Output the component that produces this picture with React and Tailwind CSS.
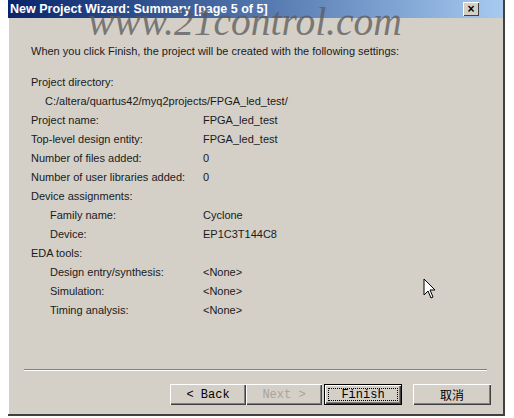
import React from "react";

const rows = [
  { label: "Project name:", value: "FPGA_led_test" },
  { label: "Top-level design entity:", value: "FPGA_led_test" },
  { label: "Number of files added:", value: "0" },
  { label: "Number of user libraries added:", value: "0" },
  { label: "Device assignments:", heading: true },
  { label: "Family name:", value: "Cyclone", indent: true },
  { label: "Device:", value: "EP1C3T144C8", indent: true },
  { label: "EDA tools:", heading: true },
  { label: "Design entry/synthesis:", value: "<None>", indent: true },
  { label: "Simulation:", value: "<None>", indent: true },
  { label: "Timing analysis:", value: "<None>", indent: true },
];

function Row({ label, value, indent }) {
  return (
    <div className="grid h-[19px] grid-cols-[172px_1fr] items-center">
      <span className={indent ? "pl-[19px]" : ""}>{label}</span>
      <span>{value}</span>
    </div>
  );
}

function Button({ children, disabled, primary, cjk }) {
  return (
    <button
      className={
        "flex h-[21px] w-full items-center justify-center bg-[#d4d0c8] text-[12px] " +
        (primary
          ? "border border-black p-[3px] shadow-[inset_1px_1px_0_#fff,inset_-1px_-1px_0_#404040,inset_-2px_-2px_0_#808080]"
          : "shadow-[inset_1px_1px_0_#fff,inset_-1px_-1px_0_#404040,inset_-2px_-2px_0_#808080]") +
        (disabled ? " text-[#a8a49c]" : " text-black")
      }
      style={{
        fontFamily: cjk
          ? '"Noto Sans CJK SC", sans-serif'
          : '"Liberation Mono", "DejaVu Sans Mono", monospace',
      }}
    >
      {primary ? (
        <span className="flex h-full w-full items-center justify-center border border-dotted border-black leading-none">
          {children}
        </span>
      ) : (
        children
      )}
    </button>
  );
}

export default function App() {
  return (
    <div className="h-[418px] w-[514px] bg-white">
      <div
        className="relative ml-[8px] h-[416px] w-[497px] border-r-2 border-b-2 border-[#404040] bg-[#d4d0c8] shadow-[inset_1px_0_0_#fff]"
        style={{ fontFamily: '"Liberation Sans", Arial, sans-serif' }}
      >
        {/* Title bar */}
        <div className="flex h-[18px] items-center justify-between bg-gradient-to-r from-[#0a246a] to-[#a6caf0] pl-[2px] pr-[24px]">
          <span className="text-[12.5px] font-bold text-white">
            New Project Wizard: Summary [page 5 of 5]
          </span>
          <span className="flex h-[14px] w-[16px] items-center justify-center bg-[#d4d0c8] text-[12px] font-bold leading-none shadow-[inset_1px_1px_0_#fff,inset_-1px_-1px_0_#404040]">
            ×
          </span>
        </div>

        {/* Watermark */}
        <div
          className="pointer-events-none absolute left-[80px] top-[-7px] text-[39.5px] italic text-[#5a5a5a] opacity-75"
          style={{ fontFamily: '"Liberation Serif", serif' }}
        >
          www.21control.com
        </div>

        {/* Content */}
        <div className="flex flex-col pl-[23px] text-[11px] text-[#1a1a1a]">
          <div className="mt-[25px] h-[16px]">
            When you click Finish, the project will be created with the following settings:
          </div>
          <div className="mt-[14px] flex flex-col">
            <div className="h-[19px] leading-[19px]">Project directory:</div>
            <div className="h-[19px] pl-[14px] leading-[19px]">
              C:/altera/quartus42/myq2projects/FPGA_led_test/
            </div>
            {rows.map((r) => (
              <Row key={r.label} {...r} />
            ))}
          </div>
        </div>

        {/* Separator */}
        <div className="mx-[16px] mt-[49px] border-t border-b border-t-[#808080] border-b-white" />

        {/* Buttons */}
        <div className="mt-[13px] flex pr-[12px] pl-[162px]">
          <div className="flex">
            <div className="w-[76px]">
              <Button>&lt; Back</Button>
            </div>
            <div className="w-[76px]">
              <Button disabled>Next &gt;</Button>
            </div>
          </div>
          <div className="ml-[2px] w-[78px]">
            <Button primary>Finish</Button>
          </div>
          <div className="ml-[11px] w-[78px]">
            <Button cjk>取消</Button>
          </div>
        </div>

        {/* Mouse cursor */}
        <svg
          className="absolute left-[415px] top-[278px]"
          width="14"
          height="22"
          viewBox="0 0 14 22"
        >
          <path
            d="M1 1 L1 17 L5 13 L8 20 L10 19 L7 12 L12 12 Z"
            fill="white"
            stroke="black"
            strokeWidth="1"
          />
        </svg>
      </div>
    </div>
  );
}
